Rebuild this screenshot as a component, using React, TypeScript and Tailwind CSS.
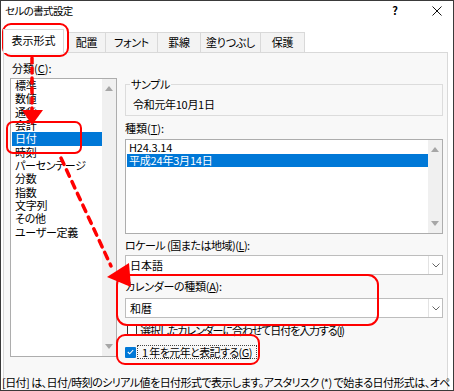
import React from "react";

const UpTri = () => (
  <svg width="8" height="5" viewBox="0 0 8 5"><polygon points="0,5 8,5 4,0" fill="#a6a6a6" /></svg>
);
const DownTri = () => (
  <svg width="8" height="5" viewBox="0 0 8 5"><polygon points="0,0 8,0 4,5" fill="#a6a6a6" /></svg>
);

const ScrollBar = () => (
  <div className="flex w-[14px] flex-col items-center justify-between bg-[#f0f0f0] py-[7px]">
    <UpTri />
    <DownTri />
  </div>
);

const Chevron = () => (
  <div className="flex w-[14px] items-center justify-center border-l border-[#e3e3e3]">
    <svg width="8" height="5" viewBox="0 0 8 5">
      <polyline points="0.5,0.5 4,4 7.5,0.5" fill="none" stroke="#666" strokeWidth="1" />
    </svg>
  </div>
);

const categories = ["標準", "数値", "通貨", "会計", "日付", "時刻", "パーセンテージ", "分数", "指数", "文字列", "その他", "ユーザー定義"];

const tabs: { label: string; w: string }[] = [
  { label: "配置", w: "w-[38px]" },
  { label: "フォント", w: "w-[52px]" },
  { label: "罫線", w: "w-[43px]" },
  { label: "塗りつぶし", w: "w-[60px]" },
  { label: "保護", w: "w-[45px]" },
];

export default function App() {
  return (
    <div className="relative h-[391px] w-[454px] overflow-hidden border border-[#3a3a3a] bg-white font-['Noto_Sans_CJK_JP','Noto_Sans',sans-serif] text-[11px] leading-[13px] text-black [font-feature-settings:'palt']">
      <div className="flex h-[19px] items-center pl-[4px]">
        <span className="text-[10.5px] tracking-[-0.6px]">セルの書式設定</span>
        <span className="ml-auto mr-[34px] text-[11px] font-bold">?</span>
        <svg width="10" height="10" viewBox="0 0 10 10" className="mr-[11px]">
          <line x1="0.5" y1="0.5" x2="9.5" y2="9.5" stroke="#111" strokeWidth="1" />
          <line x1="9.5" y1="0.5" x2="0.5" y2="9.5" stroke="#111" strokeWidth="1" />
        </svg>
      </div>

      <div className="flex h-[32px] items-end pl-[2px]">
        <div className="relative z-10 -mb-[1px] flex h-[24px] w-[61px] items-center justify-center border border-b-0 border-[#d9d9d9] bg-white pb-[2px]">
          表示形式
        </div>
        <div className="ml-[3px] flex">
          {tabs.map((t, i) => (
            <div
              key={t.label}
              className={`flex h-[20px] ${t.w} items-center justify-center border-l border-t border-[#d9d9d9] bg-[#f3f3f3] tracking-[-0.3px] ${i === tabs.length - 1 ? "border-r" : ""}`}
            >
              {t.label}
            </div>
          ))}
        </div>
      </div>

      <div className="ml-[2px] mr-[5px] h-[340px] border-l border-r border-t border-[#d9d9d9] bg-[#f8f8f8] pt-[9px]">
        <div className="flex pl-[6px]">
          <div className="flex w-[107px] flex-col">
            <div className="h-[13px] pl-[2px]">
              分類(<span className="underline">C</span>):
            </div>
            <div className="mt-[3px] flex h-[279px] border border-[#adadad] bg-white">
              <div className="flex flex-1 flex-col pl-[1px] pt-[0px]">
                {categories.map((c) => (
                  <div
                    key={c}
                    className={`flex h-[13.33px] items-center pl-[3px] tracking-[-0.3px] ${c === "日付" ? "bg-[#0078d7] text-white" : ""}`}
                  >
                    {c}
                  </div>
                ))}
              </div>
              <ScrollBar />
            </div>
          </div>

          <div className="ml-[8px] flex w-[318px] flex-col">
            <div className="relative mt-[22px] h-[32px] border border-[#dcdcdc] pl-[7px] pt-[13px] tracking-[-0.3px]">
              <span className="absolute -top-[7px] left-[4px] bg-[#f8f8f8] px-[1px]">サンプル</span>
              令和元年10月1日
            </div>
            <div className="mt-[6px] h-[13px]">
              種類(<span className="underline">T</span>):
            </div>
            <div className="mt-[4px] flex h-[95px] border border-[#adadad] bg-white">
              <div className="flex flex-1 flex-col pl-[1px] pt-[1px] tracking-[-0.2px]">
                <div className="flex h-[13px] items-center pl-[2px]">H24.3.14</div>
                <div className="flex h-[13px] items-center bg-[#0078d7] pl-[2px] text-white">平成24年3月14日</div>
              </div>
              <ScrollBar />
            </div>
            <div className="mt-[5px] h-[13px] tracking-[-0.5px]">
              ロケール (国または地域)(<span className="underline">L</span>):
            </div>
            <div className="mt-[3px] flex h-[20px] border border-[#bdbdbd] bg-white">
              <div className="flex flex-1 items-center pl-[4px]">日本語</div>
              <Chevron />
            </div>
            <div className="mt-[5px] h-[13px] tracking-[-0.3px]">
              カレンダーの種類(<span className="underline">A</span>):
            </div>
            <div className="mt-[5px] flex h-[20px] border border-[#bdbdbd] bg-white">
              <div className="flex flex-1 items-center pl-[4px]">和暦</div>
              <Chevron />
            </div>
            <div className="mt-[5px] flex h-[14px] items-center pl-[2px]">
              <div className="h-[10px] w-[10px] border border-[#333] bg-white" />
              <span className="ml-[3px] tracking-[-1.1px]">
                選択したカレンダーに合わせて日付を入力する(<span className="underline">I</span>)
              </span>
            </div>
            <div className="mt-[8px] flex h-[14px] items-center">
              <div className="flex h-[11px] w-[11px] items-center justify-center rounded-[1px] bg-[#0078d7]">
                <svg width="7" height="6" viewBox="0 0 7 6">
                  <polyline points="0.8,3 2.7,4.8 6.2,1" fill="none" stroke="#fff" strokeWidth="1.1" />
                </svg>
              </div>
              <span className="ml-[1px] flex h-[14px] items-center border border-dotted border-[#444] px-[4px] tracking-[-0.6px]">
                1 年を元年と表記する(<span className="underline">G</span>)
              </span>
            </div>
          </div>
        </div>
        <div className="-ml-[2px] mt-[17px] whitespace-nowrap leading-[13px] tracking-[-0.55px]">
          <div>[日付] は、日付/時刻のシリアル値を日付形式で表示します。アスタリスク (*) で始まる日付形式は、オペ</div>
          <div>レーティング システムで指定する地域の日付/時刻の設定に応じて変わります。アスタリスクのない形式は、</div>
        </div>
      </div>

      <svg className="pointer-events-none absolute left-[-1px] top-[-1px]" width="454" height="391" viewBox="0 0 454 391">
        <g fill="none" stroke="#f00" strokeWidth="2">
          <rect x="3" y="24" width="65" height="32" rx="8" />
          <rect x="7" y="122" width="74" height="31" rx="6" />
          <rect x="117" y="275" width="261" height="50" rx="10" />
          <rect x="117" y="335" width="142" height="29" rx="8" />
        </g>
        <g fill="none" stroke="#f00" strokeWidth="3.5" strokeLinecap="round">
          <line x1="32" y1="58" x2="32" y2="110" strokeDasharray="5 5" />
          <line x1="61" y1="158" x2="111" y2="266" strokeDasharray="7 6" />
        </g>
        <polygon points="22,110 43,110 32,125" fill="#f00" />
        <polygon points="107,277 129,263 131,287" fill="#f00" />
      </svg>
    </div>
  );
}
